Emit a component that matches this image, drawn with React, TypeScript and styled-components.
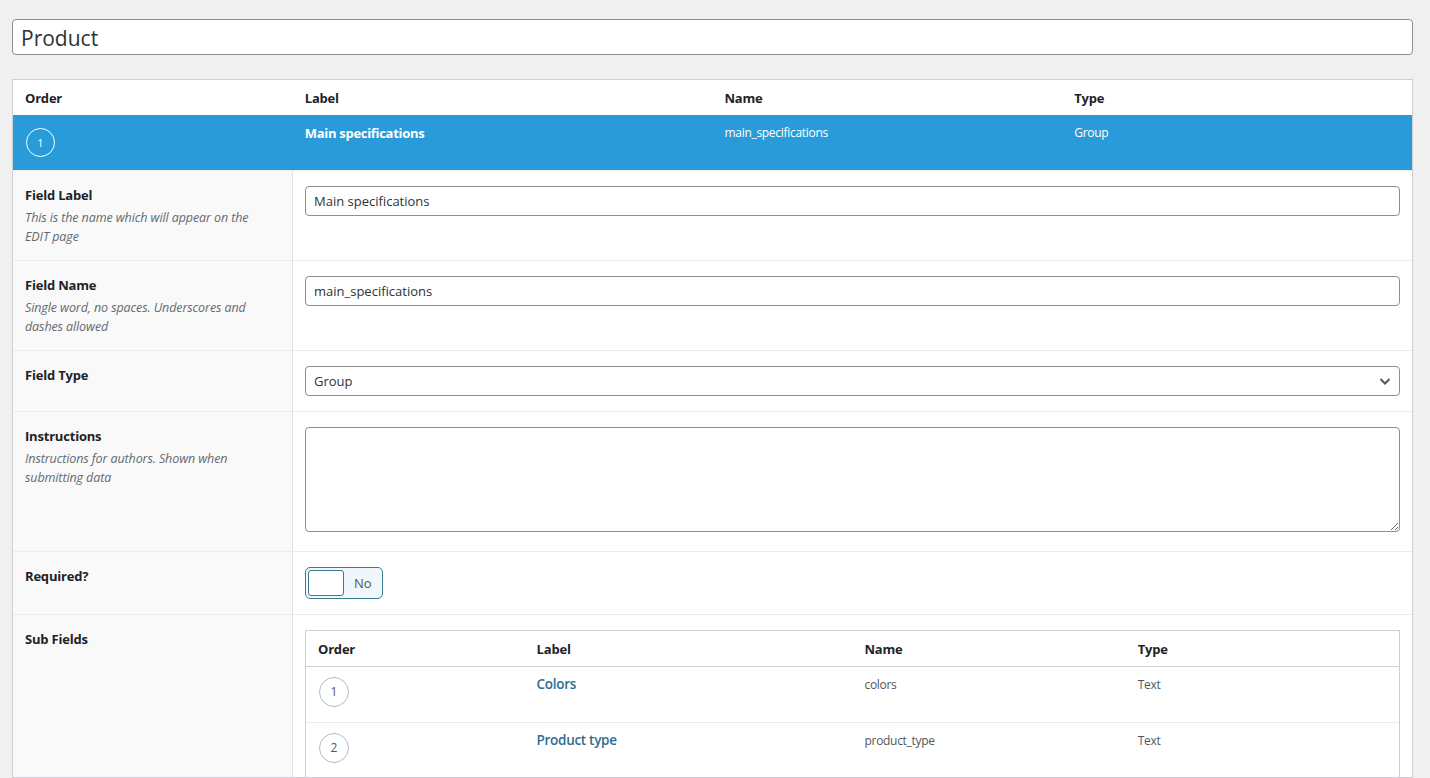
import React from "react";
import styled, { createGlobalStyle } from "styled-components";

const Global = createGlobalStyle`
  html, body { margin: 0; padding: 0; background: #f0f0f1; }
  body { font-family: "Open Sans", "Noto Sans", sans-serif; color: #1d2327; font-size: 13px; }
  * { box-sizing: border-box; }
`;

const Page = styled.div`
  padding: 19px 17px 0 12px;
  height: 778px;
  overflow: hidden;
  display: flex;
  flex-direction: column;
  gap: 24px;
`;

const TitleInput = styled.input`
  height: 38px;
  width: 100%;
  border: 1px solid #8c8f94;
  border-radius: 4px;
  background: #fff;
  padding: 2px 8px 0 8px;
  font-family: "Open Sans", sans-serif;
  font-size: 21px;
  color: #2c3338;
  outline: none;
`;

const Box = styled.div`
  border: 1px solid #ccd0d4;
  background: #fff;
`;

const Cols = styled.div<{ $h: number }>`
  display: grid;
  grid-template-columns: 20% 30% 25% 25%;
  height: ${(p) => p.$h}px;
`;

const HeadCell = styled.div`
  font-weight: 700;
  font-size: 13px;
  padding-left: 12px;
  display: flex;
  align-items: center;
  color: #1d2327;
  letter-spacing: -0.2px;
`;

const ActiveRow = styled(Cols)`
  background: #2a9bd9;
  color: #fff;
`;

const Cell = styled.div<{ $top: number }>`
  padding: ${(p) => p.$top}px 12px 0 12px;
  font-size: 12px;
  line-height: 20px;
  letter-spacing: -0.3px;
`;

const Title = styled.div`
  font-weight: 700;
  font-size: 13px;
`;

const LinkTitle = styled.div`
  font-weight: 600;
  font-size: 13.5px;
  color: #2b6e92;
`;

const Circle = styled.div<{ $light?: boolean; $size: number }>`
  width: ${(p) => p.$size}px;
  height: ${(p) => p.$size}px;
  border-radius: 50%;
  border: 1px solid ${(p) => (p.$light ? "#fff" : "#b4b9be")};
  color: ${(p) => (p.$light ? "#fff" : "#50575e")};
  display: flex;
  align-items: center;
  justify-content: center;
  font-size: ${(p) => (p.$light ? 11 : 12)}px;
  line-height: 1;
`;

const OrderCell = styled.div<{ $top: number }>`
  padding: ${(p) => p.$top}px 0 0 13px;
`;

const FieldRow = styled.div`
  display: grid;
  grid-template-columns: 280px 1fr;
  border-top: 1px solid #ececec;
`;

const LabelCell = styled.div`
  background: #f9f9f9;
  border-right: 1px solid #e1e1e1;
  padding: 14px 12px 14px 12px;
`;

const LabelText = styled.div`
  font-weight: 700;
  font-size: 13px;
  line-height: 20px;
  color: #1d2327;
  letter-spacing: -0.2px;
`;

const Desc = styled.div`
  font-style: italic;
  font-size: 12.5px;
  line-height: 19px;
  color: #646970;
  margin-top: 3px;
  max-width: 240px;
  letter-spacing: -0.1px;
`;

const InputCell = styled.div<{ $bottom?: number }>`
  padding: 15px 12px ${(p) => p.$bottom ?? 15}px 12px;
`;

const TextInput = styled.input`
  width: 100%;
  height: 30px;
  border: 1px solid #8c8f94;
  border-radius: 4px;
  padding: 0 8px;
  font-family: "Open Sans", sans-serif;
  font-size: 13px;
  color: #2c3338;
  background: #fff;
  outline: none;
`;

const SelectBox = styled.div`
  position: relative;
  height: 30px;
  border: 1px solid #8c8f94;
  border-radius: 4px;
  padding: 0 8px;
  display: flex;
  align-items: center;
  font-size: 13px;
  color: #2c3338;
  background: #fff;
`;

const Chevron = styled.svg`
  position: absolute;
  right: 7px;
  top: 9px;
`;

const TextArea = styled.textarea`
  display: block;
  width: 100%;
  height: 105px;
  border: 1px solid #8c8f94;
  border-radius: 4px;
  background: #fff;
  outline: none;
`;

const Switch = styled.div`
  width: 78px;
  height: 32px;
  border: 1px solid #3a7b90;
  border-radius: 5px;
  background: #f0f6fa;
  display: flex;
  align-items: center;
  padding: 0 2px;
  gap: 10px;
`;

const Slider = styled.div`
  width: 36px;
  height: 26px;
  background: #fff;
  border: 1px solid #3a7b90;
  border-radius: 3px;
`;

const SwitchText = styled.span`
  font-size: 13px;
  color: #50575e;
`;

const SubCell = styled.div`
  padding: 15px 12px 0 12px;
`;

const SubTable = styled.div`
  border: 1px solid #ccd0d4;
  border-bottom: none;
`;

const SubRow = styled(Cols)`
  border-top: 1px solid #ececec;
`;

const SubHead = styled(Cols)`
  border-bottom: 1px solid #ccd0d4;
  & + ${SubRow} { border-top: none; }
`;

const PlainText = styled.div`
  font-size: 12px;
  color: #50575e;
`;

const subFields = [
  { n: 1, label: "Colors", name: "colors", type: "Text" },
  { n: 2, label: "Product type", name: "product_type", type: "Text" },
];

export default function App() {
  return (
    <>
      <Global />
      <Page>
        <TitleInput defaultValue="Product" />
        <Box>
          <Cols $h={35}>
            <HeadCell>Order</HeadCell>
            <HeadCell>Label</HeadCell>
            <HeadCell>Name</HeadCell>
            <HeadCell>Type</HeadCell>
          </Cols>
          <ActiveRow $h={55}>
            <OrderCell $top={13}>
              <Circle $light $size={29}>1</Circle>
            </OrderCell>
            <Cell $top={8}><Title>Main specifications</Title></Cell>
            <Cell $top={8}>main_specifications</Cell>
            <Cell $top={8}>Group</Cell>
          </ActiveRow>

          <FieldRow>
            <LabelCell>
              <LabelText>Field Label</LabelText>
              <Desc>This is the name which will appear on the EDIT page</Desc>
            </LabelCell>
            <InputCell><TextInput defaultValue="Main specifications" /></InputCell>
          </FieldRow>

          <FieldRow>
            <LabelCell>
              <LabelText>Field Name</LabelText>
              <Desc>Single word, no spaces. Underscores and dashes allowed</Desc>
            </LabelCell>
            <InputCell><TextInput defaultValue="main_specifications" /></InputCell>
          </FieldRow>

          <FieldRow>
            <LabelCell>
              <LabelText>Field Type</LabelText>
            </LabelCell>
            <InputCell>
              <SelectBox>
                Group
                <Chevron width="14" height="10" viewBox="0 0 14 10">
                  <path d="M2.5 3 L7 7.5 L11.5 3" fill="none" stroke="#50575e" strokeWidth="2" />
                </Chevron>
              </SelectBox>
            </InputCell>
          </FieldRow>

          <FieldRow>
            <LabelCell>
              <LabelText>Instructions</LabelText>
              <Desc>Instructions for authors. Shown when submitting data</Desc>
            </LabelCell>
            <InputCell $bottom={19}><TextArea /></InputCell>
          </FieldRow>

          <FieldRow>
            <LabelCell>
              <LabelText>Required?</LabelText>
            </LabelCell>
            <InputCell>
              <Switch>
                <Slider />
                <SwitchText>No</SwitchText>
              </Switch>
            </InputCell>
          </FieldRow>

          <FieldRow>
            <LabelCell>
              <LabelText>Sub Fields</LabelText>
            </LabelCell>
            <SubCell>
              <SubTable>
                <SubHead $h={36}>
                  <HeadCell>Order</HeadCell>
                  <HeadCell>Label</HeadCell>
                  <HeadCell>Name</HeadCell>
                  <HeadCell>Type</HeadCell>
                </SubHead>
                {subFields.map((f) => (
                  <SubRow $h={55} key={f.n}>
                    <OrderCell $top={10}>
                      <Circle $size={30}>{f.n}</Circle>
                    </OrderCell>
                    <Cell $top={7}><LinkTitle>{f.label}</LinkTitle></Cell>
                    <Cell $top={8}><PlainText>{f.name}</PlainText></Cell>
                    <Cell $top={8}><PlainText>{f.type}</PlainText></Cell>
                  </SubRow>
                ))}
              </SubTable>
            </SubCell>
          </FieldRow>
        </Box>
      </Page>
    </>
  );
}
